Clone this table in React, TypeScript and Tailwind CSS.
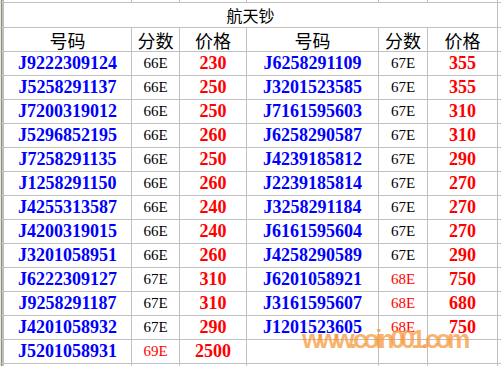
const left = [
  ['J9222309124', '66E', '230'],
  ['J5258291137', '66E', '250'],
  ['J7200319012', '66E', '250'],
  ['J5296852195', '66E', '260'],
  ['J7258291135', '66E', '250'],
  ['J1258291150', '66E', '260'],
  ['J4255313587', '66E', '240'],
  ['J4200319015', '66E', '240'],
  ['J3201058951', '66E', '260'],
  ['J6222309127', '67E', '310'],
  ['J9258291187', '67E', '310'],
  ['J4201058932', '67E', '290'],
  ['J5201058931', '69E', '2500'],
];

const right = [
  ['J6258291109', '67E', '355'],
  ['J3201523585', '67E', '355'],
  ['J7161595603', '67E', '310'],
  ['J6258290587', '67E', '310'],
  ['J4239185812', '67E', '290'],
  ['J2239185814', '67E', '270'],
  ['J3258291184', '67E', '270'],
  ['J6161595604', '67E', '270'],
  ['J4258290589', '67E', '290'],
  ['J6201058921', '68E', '750'],
  ['J3161595607', '68E', '680'],
  ['J1201523605', '68E', '750'],
  ['', '', ''],
];

const cjk = "font-['Noto_Sans_CJK_SC',sans-serif]";
const serif = "font-['Liberation_Serif',serif]";

function Cells({ row }: { row: string[] }) {
  const [code, grade, price] = row;
  // 68E / 69E 用红色
  const gradeRed = grade === '68E' || grade === '69E';
  return (
    <>
      <div className={`bg-white flex items-center justify-center ${serif} font-bold text-[18px] text-[#0000ff]`}>
        {code}
      </div>
      <div className={`bg-white flex items-center justify-center ${serif} text-[15px] ${gradeRed ? 'text-[#ff0000]' : 'text-black'}`}>
        {grade}
      </div>
      <div className={`bg-white flex items-center justify-center ${serif} font-bold text-[18px] text-[#ff0000]`}>
        {price}
      </div>
    </>
  );
}

export default function App() {
  return (
    <div className="relative w-[501px] h-[366px] overflow-hidden bg-white">
      <div className="grid grid-cols-[3px_127px_47px_66px_131px_48px_69px_3px] grid-rows-[2px_24px_23px_repeat(13,23px)_2px] gap-px bg-[#c0c0c0]">
        {/* 上一行残留 */}
        <div className="bg-[#ece9d8] w-[2px] border-r border-[#8f8b78]" />
        {Array.from({ length: 7 }).map((_, i) => (
          <div key={i} className="bg-white" />
        ))}

        {/* 标题 */}
        <div className="bg-[#ece9d8] w-[2px] border-r border-[#8f8b78]" />
        <div className={`col-span-6 bg-white flex items-center justify-center ${cjk} text-[16px] text-black`}>
          航天钞
        </div>
        <div className="bg-white" />

        {/* 表头 */}
        <div className="bg-[#ece9d8] w-[2px] border-r border-[#8f8b78]" />
        {['号码', '分数', '价格', '号码', '分数', '价格'].map((h, i) => (
          <div key={i} className={`bg-white flex items-end justify-center ${cjk} text-[18px] leading-[22px] text-black`}>
            {h}
          </div>
        ))}
        <div className="bg-white" />

        {left.map((row, i) => (
          <div key={i} className="contents">
            <div className="bg-[#ece9d8] w-[2px] border-r border-[#8f8b78]" />
            <Cells row={row} />
            <Cells row={right[i]} />
            <div className="bg-white" />
          </div>
        ))}

        <div className="bg-[#ece9d8] w-[2px] border-r border-[#8f8b78]" />
        {Array.from({ length: 7 }).map((_, i) => (
          <div key={i} className="bg-white" />
        ))}
      </div>

      {/* 水印 */}
      <div className="absolute left-[302px] top-[326px] font-['Liberation_Sans',sans-serif] font-bold text-[26px] leading-none tracking-[-4px] text-[rgba(246,150,55,0.72)] pointer-events-none">
        www.coin001.com
      </div>
    </div>
  );
}
